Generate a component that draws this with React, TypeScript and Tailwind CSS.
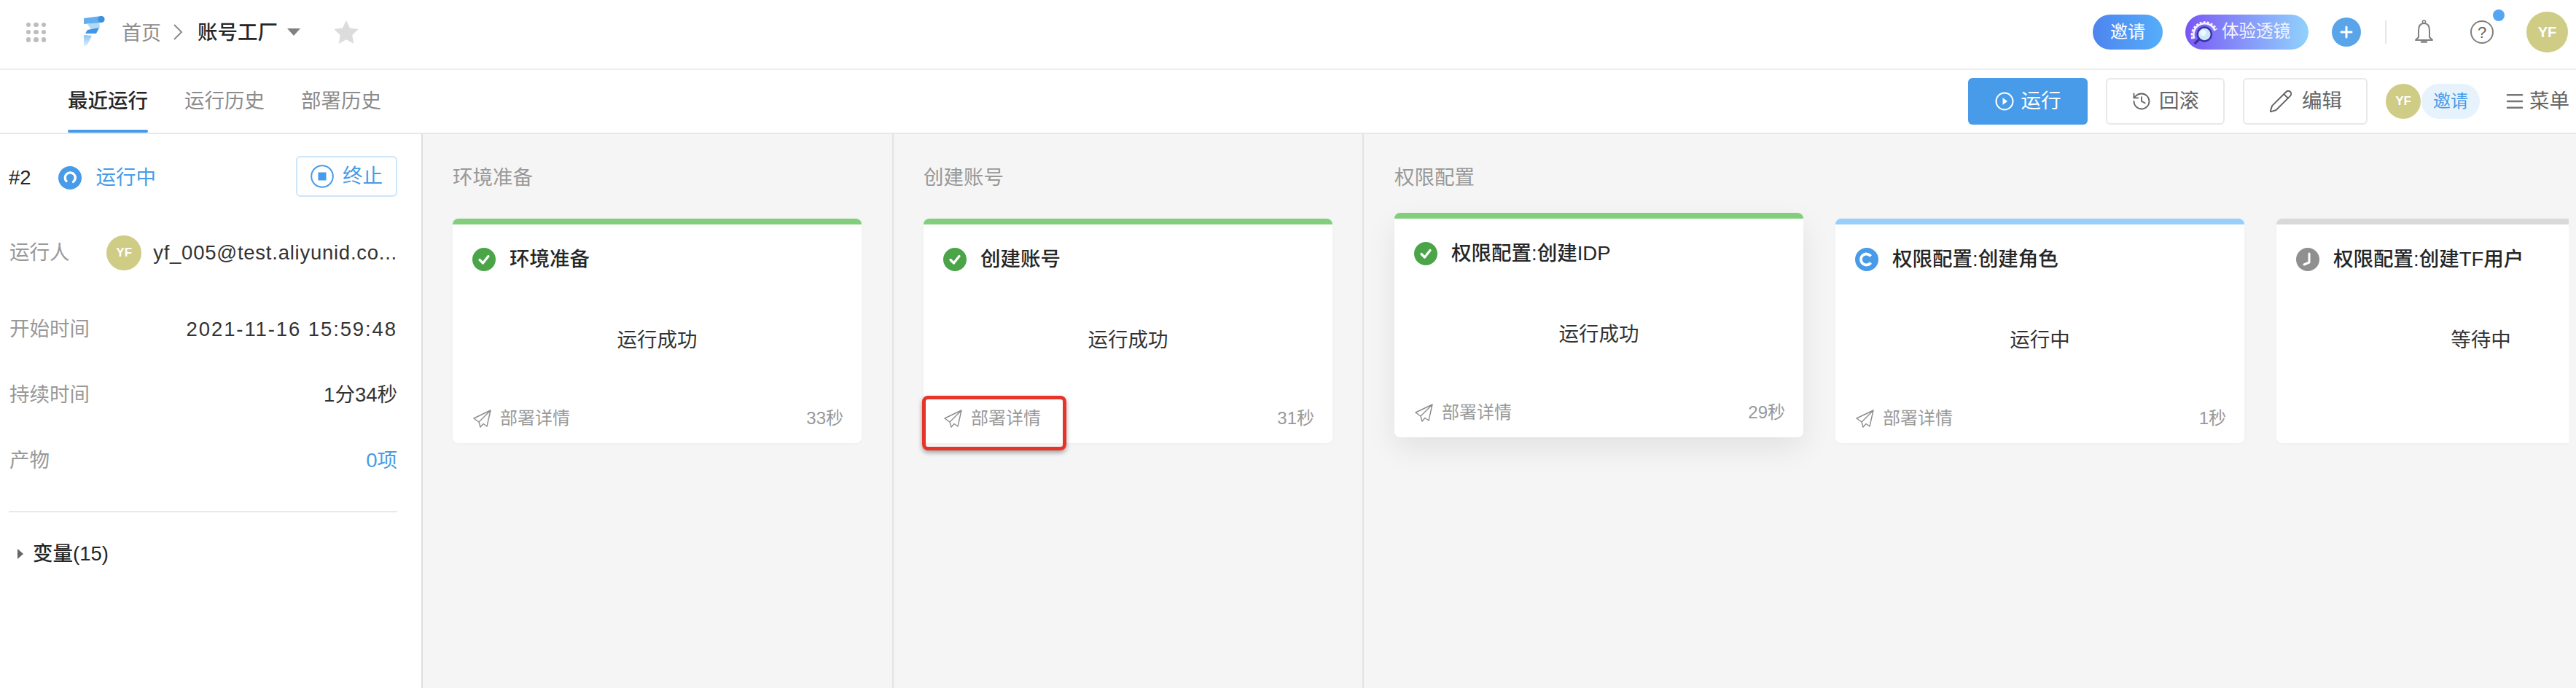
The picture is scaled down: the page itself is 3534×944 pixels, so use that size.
import { History, Menu, Pencil, Plus } from 'lucide-react'

const font = "font-['Liberation_Sans','Noto_Sans_CJK_SC',sans-serif]"

function Logo() {
  return (
    <svg width="32" height="44" viewBox="0 0 32 44" className="ml-[49px]">
      <defs>
        <linearGradient id="tail" x1="0" y1="0" x2="0" y2="1">
          <stop offset="0" stopColor="#8cc3f2" />
          <stop offset="1" stopColor="#e3f0fc" />
        </linearGradient>
      </defs>
      <path d="M8 11 L24 8 L25 16 L14 20 Z" fill="#b4d8f7" />
      <path d="M3 3 L27 0 L27 9 L3 11 Z" fill="#62aeef" />
      <circle cx="27" cy="4.5" r="4.6" fill="#3f8fdc" />
      <path d="M5 24 L8 19 L24 16 L20 24 Z" fill="#3f95e6" />
      <path d="M3 26 L14 27 L8 39 L3 42 Z" fill="url(#tail)" />
    </svg>
  )
}

function LensIcon() {
  return (
    <svg width="44" height="48" viewBox="0 0 44 48" className="shrink-0">
      <path d="M10 33.3 A17.5 17.5 0 0 1 42.5 20.7" fill="none" stroke="#f5f2ff" strokeWidth="3.5" strokeDasharray="3 2" />
      <path d="M12.4 32.8 A15 15 0 0 1 40.5 22" fill="none" stroke="#f5f2ff" strokeWidth="2.5" />
      <circle cx="26.3" cy="27" r="9.5" fill="#cbe8fb" stroke="#3a33a8" strokeWidth="2.4" />
      <circle cx="24.5" cy="25" r="4" fill="#eef8ff" />
      <path d="M19 34 L13.7 39" stroke="#3a33a8" strokeWidth="3.4" strokeLinecap="round" />
    </svg>
  )
}

function Check() {
  return (
    <svg width="32" height="32" viewBox="0 0 32 32" className="shrink-0">
      <circle cx="16" cy="16" r="16" fill="#4ba548" />
      <path d="M10 16.5 L14.5 21 L22 11.5" fill="none" stroke="#fff" strokeWidth="3.2" strokeLinecap="round" strokeLinejoin="round" />
    </svg>
  )
}

function Spinning() {
  return (
    <svg width="32" height="32" viewBox="0 0 32 32" className="shrink-0">
      <circle cx="16" cy="16" r="16" fill="#479be8" />
      <path d="M11 20.5 A7 7 0 1 1 20.5 21.5" fill="none" stroke="#fff" strokeWidth="3.4" strokeLinecap="round" />
    </svg>
  )
}

function Running() {
  return (
    <svg width="32" height="32" viewBox="0 0 32 32" className="shrink-0">
      <circle cx="16" cy="16" r="16" fill="#479be8" />
      <path d="M21.5 11.5 A7.5 7.5 0 1 0 21.5 20.5" fill="none" stroke="#fff" strokeWidth="3.8" />
    </svg>
  )
}

function Waiting() {
  return (
    <svg width="32" height="32" viewBox="0 0 32 32" className="shrink-0">
      <circle cx="16" cy="16" r="16" fill="#8f8f8f" />
      <path d="M18 8 L18 20 L11 23" fill="none" stroke="#fff" strokeWidth="3" strokeLinecap="round" strokeLinejoin="round" />
    </svg>
  )
}

function Plane() {
  return (
    <svg width="25" height="25" viewBox="0 0 25 25" className="shrink-0">
      <path d="M24 1 L1 12 L8 17 L10 24 L14 19.5 L19 23 Z M24 1 L8 17" fill="none" stroke="#8c8c8c" strokeWidth="1.4" strokeLinejoin="round" />
    </svg>
  )
}

function BellIcon() {
  return (
    <svg width="27" height="34" viewBox="0 0 27 34" className="ml-[38px]">
      <circle cx="13.5" cy="3" r="2" fill="none" stroke="#808080" strokeWidth="1.6" />
      <path d="M13.5 5 C7 5 6 10 6 15 L6 24 L2 28 L25 28 L21 24 L21 15 C21 10 20 5 13.5 5 Z" fill="none" stroke="#808080" strokeWidth="2" strokeLinejoin="round" />
      <path d="M10 30.5 L17 30.5" stroke="#808080" strokeWidth="2.4" strokeLinecap="round" />
    </svg>
  )
}

function Card(props: {
  title: string
  status: string
  bar: string
  icon: React.ReactNode
  time?: string
  footer?: boolean
  hover?: boolean
  marked?: boolean
}) {
  const { title, status, bar, icon, time, footer = true, hover, marked } = props
  return (
    <div className={`flex h-[308px] w-[561px] shrink-0 flex-col rounded-lg border-t-8 bg-white ${bar} ${hover ? '-mt-2 shadow-[0_16px_40px_rgba(0,0,0,0.08)]' : 'shadow-[0_1px_4px_rgba(0,0,0,0.03)]'}`}>
      <div className="flex items-center gap-[19px] pl-[27px] pt-8">
        {icon}
        <span className="text-[27.5px] leading-8 font-medium text-[#262626]">{title}</span>
      </div>
      <div className="flex flex-1 items-center justify-center pt-[5px] text-[27.5px] text-[#333]">{status}</div>
      <div className="relative mb-4 flex h-[36px] items-center justify-between pl-7 pr-[25px] text-2xl text-[#999]">
        {footer && (
          <span className="flex items-center gap-[12px]">
            <Plane />
            部署详情
          </span>
        )}
        <span>{time}</span>
        {marked && (
          <span className="absolute -left-[2px] -top-[13px] h-[75px] w-[198px] rounded-lg border-[5px] border-[#e5352b] shadow-[0_3px_6px_rgba(0,0,0,0.35)]" />
        )}
      </div>
    </div>
  )
}

function Row(props: { label: string; children: React.ReactNode }) {
  return (
    <div className="flex h-[90px] items-center justify-between pl-[1px] pt-[3px] text-[27.5px]">
      <span className="text-[#999]">{props.label}</span>
      {props.children}
    </div>
  )
}

export default function App() {
  return (
    <div className={`${font} flex h-screen w-full flex-col overflow-hidden bg-white`}>
      {/* top bar */}
      <div className="flex h-[96px] shrink-0 items-center border-b-2 border-[#eeeeee] pb-[6px]">
        <div className="ml-9 grid h-[27px] w-[27px] grid-cols-3 gap-[4px]">
          {Array.from({ length: 9 }).map((_, i) => (
            <span key={i} className="rounded-full bg-[#bdbdbd]" />
          ))}
        </div>
        <Logo />
        <span className="ml-[23px] mt-1 text-[27px] text-[#8c8c8c]">首页</span>
        <svg width="14" height="24" viewBox="0 0 14 24" className="ml-4">
          <path d="M2 2 L12 12 L2 22" fill="none" stroke="#8c8c8c" strokeWidth="2" />
        </svg>
        <span className="ml-[20px] mt-[2px] text-[27.5px] font-medium text-[#262626]">账号工厂</span>
        <span className="ml-[13px] h-0 w-0 border-x-[9px] border-t-[10px] border-x-transparent border-t-[#808080]" />
        <svg width="34" height="32" viewBox="0 0 24 23" className="ml-[46px]">
          <path d="M12 0 L15.6 7.6 L24 8.7 L17.9 14.5 L19.4 23 L12 18.9 L4.6 23 L6.1 14.5 L0 8.7 L8.4 7.6 Z" fill="#dcdcdc" />
        </svg>
        <div className="ml-auto flex items-center">
          <span className="flex h-12 w-24 items-center justify-center rounded-3xl bg-gradient-to-r from-[#4e84ee] to-[#55aefa] text-2xl text-white">邀请</span>
          <span className="ml-[31px] flex h-12 w-[169px] items-center gap-[6px] rounded-3xl bg-gradient-to-r from-[#7a55f3] to-[#90d2fc] text-[23.5px] text-[#f5f2ff]">
            <LensIcon />
            体验透镜
          </span>
          <span className="ml-8 flex h-10 w-10 items-center justify-center rounded-full bg-[#5aa5ea] text-white">
            <Plus size={24} strokeWidth={3} />
          </span>
          <span className="ml-[33px] h-8 w-[2px] bg-[#e6e6e6]" />
          <BellIcon />
          <div className="relative ml-[50px] flex h-8 w-8 items-center justify-center rounded-full border-2 border-[#808080] text-[22px] text-[#666]">
            ?
            <span className="absolute -right-[17px] -top-[17px] h-4 w-4 rounded-full bg-[#55a6f2]" />
          </div>
          <span className="ml-[45px] mr-[11px] flex h-14 w-[57px] items-center justify-center rounded-full bg-[#cfcc85] text-[20px] font-bold text-white">YF</span>
        </div>
      </div>

      {/* tabs and actions */}
      <div className="flex h-[88px] shrink-0 items-center border-b-2 border-[#e8e8e8] pl-[93px]">
        <div className="flex h-full items-center gap-[50px] text-[27.5px] text-[#8c8c8c]">
          <span className="relative flex h-full items-center font-medium text-[#262626]">
            最近运行
            <span className="absolute inset-x-0 bottom-0 h-1 rounded-sm bg-[#479be8]" />
          </span>
          <span>运行历史</span>
          <span>部署历史</span>
        </div>
        <div className="ml-auto flex items-center text-[27.5px]">
          <span className="flex h-16 w-[164px] items-center justify-center gap-[10px] rounded-md bg-[#479be8] text-white">
            <svg width="26" height="26" viewBox="0 0 26 26">
              <circle cx="13" cy="13" r="11.5" fill="none" stroke="#fff" strokeWidth="2" />
              <path d="M10.5 8 L17 13 L10.5 18 Z" fill="#fff" />
            </svg>
            运行
          </span>
          <span className="ml-[25px] flex h-16 w-[163px] items-center justify-center gap-[10px] rounded-md border-2 border-[#e8e8e8] text-[#666]">
            <History size={28} strokeWidth={1.6} />
            回滚
          </span>
          <span className="ml-[25px] flex h-16 w-[171px] items-center justify-center gap-[12px] rounded-md border-2 border-[#e8e8e8] text-[#666]">
            <Pencil size={34} strokeWidth={1.4} />
            编辑
          </span>
          <span className="ml-[25px] flex h-12 w-12 items-center justify-center rounded-full bg-[#cfcc85] text-[17px] font-bold text-white">YF</span>
          <span className="ml-[1px] flex h-12 w-20 items-center justify-center rounded-3xl bg-[#e6f3fd] text-2xl text-[#479be8]">邀请</span>
          <Menu size={30} strokeWidth={2} className="ml-[33px] text-[#777]" />
          <span className="ml-[5px] mr-[9px] text-[#666]">菜单</span>
        </div>
      </div>

      <div className="flex min-h-0 flex-1">
        {/* run details */}
        <div className="w-[580px] shrink-0 border-r-2 border-[#dedede] pl-3 pr-[33px] pt-[30px]">
          <div className="flex h-14 items-center text-[27.5px]">
            <span className="mt-1 text-[#262626]">#2</span>
            <span className="ml-[37px] mt-1"><Spinning /></span>
            <span className="ml-5 mt-1 text-[#479be8]">运行中</span>
            <span className="ml-auto flex h-14 w-[139px] items-center justify-center gap-3 rounded-md border-2 border-[#cfe5f8] text-[#479be8]">
              <svg width="32" height="32" viewBox="0 0 32 32">
                <circle cx="16" cy="16" r="14.8" fill="none" stroke="#479be8" strokeWidth="2" />
                <rect x="10.5" y="10.5" width="11" height="11" fill="#479be8" />
              </svg>
              终止
            </span>
          </div>
          <div className="mt-[30px]">
            <Row label="运行人">
              <span className="flex items-center gap-4 text-[#333]">
                <span className="flex h-12 w-12 items-center justify-center rounded-full bg-[#cfcc85] text-[17px] font-bold text-white">YF</span>
                <span className="tracking-[0.75px]">yf_005@test.aliyunid.co...</span>
              </span>
            </Row>
            <div className="mt-[15px]">
              <Row label="开始时间"><span className="tracking-[1.9px] text-[#333]">2021-11-16 15:59:48</span></Row>
            </div>
            <Row label="持续时间"><span className="text-[#333]">1分34秒</span></Row>
            <Row label="产物"><span className="text-[#479be8]">0项</span></Row>
          </div>
          <div className="mt-[26px] border-t-2 border-[#e8e8e8] pt-[37px]">
            <div className="flex h-10 items-center pl-3 text-[27.5px] font-medium text-[#262626]">
              <span className="h-0 w-0 border-y-[7px] border-l-[8px] border-y-transparent border-l-[#666]" />
              <span className="ml-[13px]">变量(15)</span>
            </div>
          </div>
        </div>

        {/* stages */}
        <div className="flex min-w-0 flex-1 bg-[#f5f5f5] pr-[10px]">
          <div className="w-[646px] shrink-0 border-r-2 border-[#e3e3e3] pl-[41px] pt-[42px]">
            <div className="mb-[38px] text-[27.5px] leading-9 text-[#999]">环境准备</div>
            <Card title="环境准备" status="运行成功" bar="border-[#81cf7c]" icon={<Check />} time="33秒" />
          </div>
          <div className="w-[645px] shrink-0 border-r-2 border-[#e3e3e3] pl-[41px] pt-[42px]">
            <div className="mb-[38px] text-[27.5px] leading-9 text-[#999]">创建账号</div>
            <Card title="创建账号" status="运行成功" bar="border-[#81cf7c]" icon={<Check />} time="31秒" marked />
          </div>
          <div className="min-w-0 flex-1 overflow-hidden pl-[42px] pt-[42px]">
            <div className="mb-[38px] text-[27.5px] leading-9 text-[#999]">权限配置</div>
            <div className="flex gap-11 pb-14">
              <Card title="权限配置:创建IDP" status="运行成功" bar="border-[#81cf7c]" icon={<Check />} time="29秒" hover />
              <Card title="权限配置:创建角色" status="运行中" bar="border-[#96cffb]" icon={<Running />} time="1秒" />
              <Card title="权限配置:创建TF用户" status="等待中" bar="border-[#d9d9d9]" icon={<Waiting />} footer={false} />
            </div>
          </div>
        </div>
      </div>
    </div>
  )
}
